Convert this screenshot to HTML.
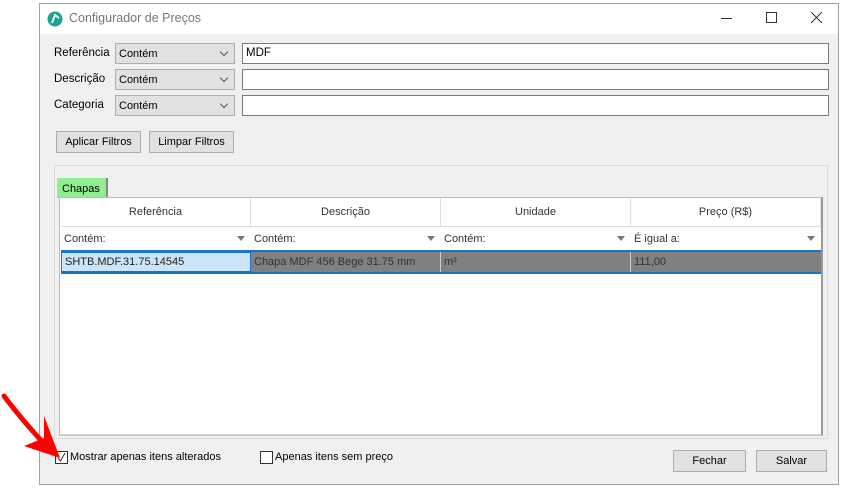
<!DOCTYPE html><html><head><style>
body{margin:0;width:845px;height:492px;background:#fff;position:relative;font-family:"Liberation Sans",sans-serif;font-size:11px;color:#000;overflow:hidden}
.a{position:absolute}
.win{left:39px;top:3px;width:800px;height:482px;border:1px solid #a0a0a0;background:#f0f0f0;box-sizing:border-box}
.title{left:40px;top:4px;width:798px;height:30px;background:#fff}
.lbl{font-size:11.5px}
.combo{background:#e1e1e1;border:1px solid #adadad;box-sizing:border-box;width:120px;height:21px;padding:4px 0 0 3px}
.combo:after{content:"";position:absolute;right:7px;top:5px;width:5px;height:5px;border-right:1px solid #555;border-bottom:1px solid #555;transform:rotate(45deg)}
.inp{background:#fff;border:1px solid #7a7a7a;box-sizing:border-box;width:587px;height:21px;padding:3px 0 0 3px;font-size:11.5px}
.btn{background:#e1e1e1;border:1px solid #adadad;box-sizing:border-box;height:22px;text-align:center;line-height:20px}
.cell{box-sizing:border-box;height:24px;line-height:24px;padding-left:3px;color:#333}
.hd{text-align:center;color:#333;height:29px;line-height:29px;border-right:1px solid #ddd;box-sizing:border-box;width:190px}
.f{color:#333;width:190px;height:23px;line-height:24px;padding-left:3px;box-sizing:border-box;position:relative}
.tri{position:absolute;right:6px;top:9px;width:0;height:0;border-left:4px solid transparent;border-right:4px solid transparent;border-top:5px solid #777}
</style></head><body>
<div class="a win"></div>
<div class="a title"></div>
<svg class="a" style="left:47px;top:11px" width="16" height="16"><circle cx="8" cy="8" r="7.5" fill="#1aa394"/><path d="M5 12 L8 4 L12 7" stroke="#fff" stroke-width="1.8" fill="none"/></svg>
<div class="a" style="left:69px;top:11px;font-size:12.5px;color:#777">Configurador de Preços</div>
<div class="a" style="left:721px;top:18px;width:11px;height:1px;background:#333"></div>
<div class="a" style="left:766px;top:12px;width:9px;height:9px;border:1px solid #333"></div>
<svg class="a" style="left:811px;top:12px" width="11" height="11"><path d="M0 0L11 11M11 0L0 11" stroke="#333" stroke-width="1"/></svg>

<div class="a lbl" style="left:54px;top:47px">Referência</div>
<div class="a lbl" style="left:54px;top:73px">Descrição</div>
<div class="a lbl" style="left:54px;top:99px">Categoria</div>
<div class="a combo" style="left:115px;top:43px">Contém</div>
<div class="a combo" style="left:115px;top:69px">Contém</div>
<div class="a combo" style="left:115px;top:95px">Contém</div>
<div class="a inp" style="left:242px;top:43px">MDF</div>
<div class="a inp" style="left:242px;top:69px"></div>
<div class="a inp" style="left:242px;top:95px"></div>
<div class="a btn" style="left:56px;top:131px;width:85px">Aplicar Filtros</div>
<div class="a btn" style="left:149px;top:131px;width:85px">Limpar Filtros</div>

<div class="a" style="left:54px;top:165px;width:774px;height:274px;border:1px solid #dcdcdc;box-sizing:border-box"></div>
<div class="a" style="left:57px;top:178px;width:51px;height:20px;background:#90ee90;border-right:2px solid #888;box-sizing:border-box;padding:5px 0 0 5px">Chapas</div>
<div class="a" style="left:59px;top:197px;width:764px;height:239px;background:#fff;border:1px solid #bbb;border-right:2px solid #999;border-bottom:2px solid #ccc;box-sizing:border-box"></div>
<div class="a" style="left:61px;top:198px;display:flex">
<div class="hd">Referência</div><div class="hd">Descrição</div><div class="hd">Unidade</div><div class="hd">Preço (R$)</div></div>
<div class="a" style="left:61px;top:226px;width:760px;height:1px;background:#ddd"></div>
<div class="a" style="left:61px;top:227px;display:flex">
<div class="f">Contém:<span class="tri"></span></div><div class="f">Contém:<span class="tri"></span></div><div class="f">Contém:<span class="tri"></span></div><div class="f">É igual a:<span class="tri"></span></div></div>
<div class="a" style="left:61px;top:250px;width:760px;height:24px;border-top:2px solid #1874c8;border-bottom:2px solid #1874c8;box-sizing:border-box;display:flex;background:#808080">
<div class="cell" style="width:190px;background:#cce4f7;border:1px solid #1874c8;height:20px;line-height:19px;color:#222">SHTB.MDF.31.75.14545</div>
<div class="cell" style="width:190px;height:20px;line-height:20px;border-right:1px solid #ccc">Chapa MDF 456 Bege 31.75 mm</div>
<div class="cell" style="width:190px;height:20px;line-height:20px;border-right:1px solid #ccc">m²</div>
<div class="cell" style="width:190px;height:20px;line-height:20px">111,00</div></div>

<div class="a" style="left:55px;top:451px;width:11px;height:11px;border:1px solid #333;background:#fff"></div>
<svg class="a" style="left:56px;top:452px" width="11" height="11"><path d="M2 6L4.5 9L9 1" stroke="#333" fill="none"/></svg>
<div class="a" style="left:70px;top:451px">Mostrar apenas itens alterados</div>
<div class="a" style="left:260px;top:451px;width:11px;height:11px;border:1px solid #333;background:#fff"></div>
<div class="a" style="left:275px;top:451px">Apenas itens sem preço</div>
<div class="a btn" style="left:673px;top:450px;width:73px">Fechar</div>
<div class="a btn" style="left:756px;top:450px;width:71px">Salvar</div>

<svg class="a" style="left:0;top:390px" width="80" height="80"><path d="M4 6 Q22 30 48 58" stroke="#f00" stroke-width="5" fill="none" stroke-linecap="round"/><path d="M60 68 L24 56 L44 48 L44 26 Z" fill="#f00"/></svg>
</body></html>
